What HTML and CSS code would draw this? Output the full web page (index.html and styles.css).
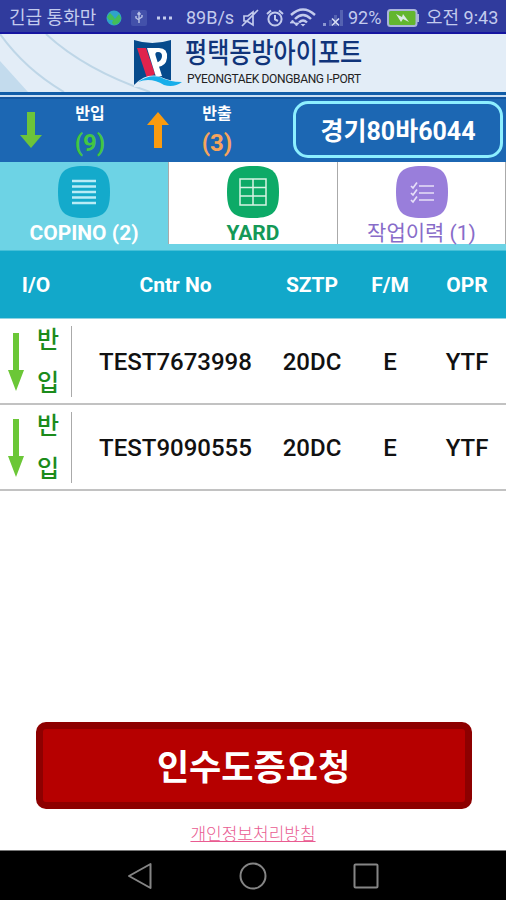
FILE: index.html
```html
<!DOCTYPE html>
<html lang="ko">
<head>
  <meta charset="UTF-8">
  <meta name="viewport" content="width=device-width, initial-scale=1.0">
  <title>평택동방아이포트</title>
  <link rel="stylesheet" href="styles.css">
</head>
<body>

  <div class="status-bar">
    <span class="carrier">긴급 통화만</span>
    <svg class="globe" width="16" height="16" viewBox="0 0 16 16">
      <circle cx="8" cy="8" r="7.5" fill="#2fa3c9"/>
      <path d="M1 7 L4 3 L7 6 L9 9 L13 4 L15 8 Q14 14 8 15 L6 13 L7 10 L3 10 Z" fill="#43bd58"/>
    </svg>
    <svg class="usb" width="16" height="16" viewBox="0 0 16 16">
      <rect width="16" height="16" rx="2" fill="#4351aa"/>
      <path d="M8 3 V13 M5 6 V8 L8 10 M11 5 V7 L8 9 M6.5 4.5 L8 2.5 L9.5 4.5" fill="none" stroke="#b9c2e6" stroke-width="1.4"/>
    </svg>
    <svg class="more" width="15" height="4" viewBox="0 0 15 4">
      <path d="M0 .5h3v3H0zM6 .5h3v3H6zM12 .5h3v3h-3z" fill="#c3cbed"/>
    </svg>
    <span class="speed">89B/s</span>
    <svg class="mute" width="18" height="18" viewBox="0 0 18 18" fill="none" stroke="#c3cbed" stroke-width="1.7">
      <path d="M3 7 V12 H6 L12 16 V3 L7 7 Z M1 17 L17 1"/>
    </svg>
    <svg class="alarm" width="18" height="18" viewBox="0 0 18 18" fill="none" stroke="#c3cbed" stroke-width="2">
      <circle cx="9" cy="10" r="6.6"/>
      <path d="M9 6 V10.5 L12 12 M1 5 L5 1.5 M17 5 L13 1.5"/>
    </svg>
    <svg class="wifi" width="26" height="19" viewBox="0 0 26 19" fill="none" stroke="#c3cbed" stroke-width="2.4">
      <path d="M1 7 Q13 -4 25 7 M5 11 Q13 3 21 11 M9 14.5 Q13 10.5 17 14.5"/>
      <path d="M13 18.5 L10.5 16 H15.5 Z" fill="#c3cbed" stroke="none"/>
      <path d="M0 15 L2.5 12 L5 15 Z M4 15 L6.5 18 L9 15 Z" fill="#c3cbed" stroke-width=".8"/>
    </svg>
    <svg class="signal" width="21" height="18" viewBox="0 0 21 18">
      <path d="M0 14h3v3H0z" fill="#8c97d0"/>
      <path d="M6 11h3v6H6zM11 6h3v11h-3zM17 1h3v16h-3z" fill="#5562b1"/>
      <path d="M9 9.5 L16 16.5 M16 9.5 L9 16.5" stroke="#d5dbf3" stroke-width="1.7"/>
    </svg>
    <span class="percent">92%</span>
    <svg class="battery" width="33" height="18" viewBox="0 0 33 18">
      <rect x="1" y="1" width="28.5" height="16" rx="2.5" fill="#63b62e" stroke="#aab4db" stroke-width="2"/>
      <path d="M30 5h2v8h-2z" fill="#aab4db"/>
      <path d="M9 5 L15 8 L16 5 L22 13 L16 10 L14 13 Z" fill="#dceae4"/>
    </svg>
    <span class="clock">오전 9:43</span>
  </div>

  <header class="brand">
    <svg class="brand-lines" viewBox="0 0 506 58" preserveAspectRatio="none">
      <path d="M0 27 L28 58 H0 Z" fill="#c3dbed"/>
      <path d="M0 0 Q25 35 64 58 M46 0 Q85 36 150 58" fill="none" stroke="#bed6e7" stroke-width="2"/>
    </svg>
    <svg class="logo" width="50" height="48" viewBox="0 0 50 48">
      <path d="M1 1 Q19 7 38 1 V42 L1 46 Z" fill="#064a8c"/>
      <path d="M4 9 H13 L22 35 L14 39 Z" fill="#e0234d"/>
      <path d="M14 9 H26 Q35 9 34 19 Q33 27 25 28 L23 24 Q29 22 29 17 Q29 13 25 13 Q21 13 23 18 L29 37 L23 38 Z" fill="#fff"/>
      <path d="M1 46 Q14 33 28 38 Q38 43 49 42 L40 48 H1 Z" fill="#e3edf7"/>
      <path d="M5 43 Q16 35 27 38 Q36 43 49 43 Q41 49 31 46 Q18 38 5 43 Z" fill="#18aeea"/>
    </svg>
    <div class="brand-text">
      <div class="brand-ko">평택동방아이포트</div>
      <div class="brand-en">PYEONGTAEK DONGBANG I-PORT</div>
    </div>
  </header>

  <section class="summary">
    <svg class="arrow-in" width="22" height="36" viewBox="0 0 22 36">
      <path d="M7 0h8v23h7L11 36 0 23h7z" fill="#6cc43a"/>
    </svg>
    <div class="count">
      <b>반입</b>
      <span class="count-in">(9)</span>
    </div>
    <svg class="arrow-out" width="22" height="36" viewBox="0 0 22 36">
      <path d="M7 36h8V13h7L11 0 0 13h7z" fill="#fa9b0f"/>
    </svg>
    <div class="count">
      <b>반출</b>
      <span class="count-out">(3)</span>
    </div>
    <div class="plate"><span>경기80바6044</span></div>
  </section>

  <nav class="tabs">
    <div class="tab tab-copino">
      <svg width="52" height="52" viewBox="0 0 52 52">
        <path d="M26 0C46 0 52 6 52 26S46 52 26 52 0 46 0 26 6 0 26 0Z" fill="#14aacb"/>
        <path d="M14 15H38M14 20.5H38M14 26H38M14 31.5H38M14 37H38" stroke="#b9ecf6" stroke-width="2.4"/>
      </svg>
      <span>COPINO (2)</span>
    </div>
    <div class="tab tab-yard">
      <svg width="52" height="52" viewBox="0 0 52 52">
        <path d="M26 0C46 0 52 6 52 26S46 52 26 52 0 46 0 26 6 0 26 0Z" fill="#0daa67"/>
        <path d="M13 13H39V39H13ZM13 21.5H39M13 30H39M26 13V39" fill="none" stroke="#d8f3e4" stroke-width="1.5"/>
      </svg>
      <span>YARD</span>
    </div>
    <div class="tab tab-history">
      <svg width="52" height="52" viewBox="0 0 52 52">
        <path d="M26 0C46 0 52 6 52 26S46 52 26 52 0 46 0 26 6 0 26 0Z" fill="#997edb"/>
        <path d="M23 20H38M23 27H38M23 34H38M15 20L17 22L21 16.5M15 27L17 29L21 23.5M15 34L17 36L21 30.5" fill="none" stroke="#e6dff8" stroke-width="1.7"/>
      </svg>
      <span>작업이력 (1)</span>
    </div>
  </nav>

  <div class="list">
    <div class="row head">
      <span>I/O</span>
      <span>Cntr No</span>
      <span>SZTP</span>
      <span>F/M</span>
      <span>OPR</span>
    </div>
    <div class="row">
      <div class="io">
        <svg width="16" height="58" viewBox="0 0 16 58"><path d="M5 0h6v37h5L8 58 0 37h5z" fill="#6bc737"/></svg>
        <span>반<br>입</span>
      </div>
      <span>TEST7673998</span>
      <span>20DC</span>
      <span>E</span>
      <span>YTF</span>
    </div>
    <div class="row">
      <div class="io">
        <svg width="16" height="58" viewBox="0 0 16 58"><path d="M5 0h6v37h5L8 58 0 37h5z" fill="#6bc737"/></svg>
        <span>반<br>입</span>
      </div>
      <span>TEST9090555</span>
      <span>20DC</span>
      <span>E</span>
      <span>YTF</span>
    </div>
  </div>

  <footer class="actions">
    <button type="button" class="request">인수도증요청</button>
    <a href="#" class="privacy">개인정보처리방침</a>
  </footer>

  <div class="nav-bar">
    <svg width="26" height="28" viewBox="0 0 26 28"><path d="M2 14L23.5 2V26Z"/></svg>
    <svg width="28" height="28" viewBox="0 0 28 28"><circle cx="14" cy="14" r="12.5"/></svg>
    <svg width="26" height="26" viewBox="0 0 26 26"><rect x="1.5" y="1.5" width="23" height="23" rx="1"/></svg>
  </div>

</body>
</html>
```
FILE: styles.css
```css
* {
  box-sizing: border-box;
}
body {
  margin: 0;
  height: 900px;
  display: flex;
  flex-direction: column;
  overflow: hidden;
  background-color: #fff;
  font-family: Roboto, "Noto Sans CJK KR", sans-serif;
}
svg {
  display: block;
  flex-shrink: 0;
}

/* phone status bar */
.status-bar {
  height: 34px;
  display: flex;
  align-items: center;
  padding: 3px 0 0 9px;
  background-color: #303b9d;
  border-bottom: 2px solid #1515a0;
  color: #c3cbed;
  font-size: 18px;
  line-height: 29px;
  white-space: nowrap;
}
.carrier {
  width: 97px;
}
.usb {
  margin-left: 9px;
}
.more {
  margin-left: 10px;
}
.speed {
  width: 56px;
  margin-left: 14px;
}
.mute {
  margin-left: -1px;
}
.alarm {
  margin-left: 7px;
}
.wifi {
  margin-left: 6px;
}
.signal {
  margin-left: 7px;
}
.percent {
  width: 38px;
  margin-left: 4px;
}
.battery {
  margin-left: 1px;
}
.clock {
  margin-left: 6px;
}

/* company banner */
.brand {
  position: relative;
  height: 58px;
  display: flex;
  padding: 5px 0 0 133px;
  background-color: #e3edf7;
}
.brand-lines {
  position: absolute;
  top: 0;
  left: 0;
  width: 100%;
  height: 100%;
}
.logo,
.brand-text {
  position: relative;
}
.brand-text {
  margin-left: 2px;
  white-space: nowrap;
}
.brand-ko {
  width: 176px;
  height: 32px;
  color: #10347a;
  font-size: 28px;
  font-weight: 500;
  line-height: 29px;
  transform: scaleX(0.86);
  transform-origin: left;
}
.brand-en {
  margin-left: 2px;
  color: #222;
  font-size: 12px;
  line-height: 16px;
  letter-spacing: -0.35px;
}

/* in / out totals */
.summary {
  height: 70px;
  display: flex;
  align-items: flex-start;
  padding: 12px 3px 0 20px;
  background: linear-gradient(#115ca7 0 3px, #c9def3 3px 5px, #1456a1 5px 7px, #1c67b3 7px);
}
.arrow-in,
.arrow-out {
  margin-top: 8px;
}
.count {
  width: 96px;
  text-align: center;
  color: #fff;
}
.count b {
  display: block;
  font-size: 16px;
  line-height: 20px;
}
.count span {
  display: block;
  font-size: 24px;
  font-weight: 700;
  line-height: 38px;
}
.count .count-in {
  color: #43c643;
}
.count .count-out {
  color: #f6a45c;
}
.arrow-out {
  margin-left: 9px;
}
.plate {
  width: 210px;
  height: 57px;
  margin: -3px 0 0 auto;
  border: 3px solid #8defff;
  border-radius: 15px;
  color: #fff;
  font-size: 25px;
  font-weight: 700;
  line-height: 55px;
  text-align: center;
}

/* tabs */
.tabs {
  height: 89px;
  display: grid;
  grid-template-columns: 168px 169px 169px;
  background-color: #6dd3e5;
  border-bottom: 1px solid #45bfd7;
}
.tab {
  height: 82px;
  display: flex;
  flex-direction: column;
  align-items: center;
  padding-top: 4px;
  background-color: #fff;
  border-left: 1px solid #aaa;
  font-size: 21px;
  font-weight: 700;
  line-height: 30px;
  white-space: nowrap;
}
.tab span {
  height: 26px;
}
.tab-copino {
  background-color: #6dd3e5;
  border-left: 0;
  color: #fff;
}
.tab-yard {
  color: #149957;
}
.tab-history {
  color: #886cc9;
  font-weight: 400;
  border-right: 1px solid #aaa;
}

/* container list */
.row {
  height: 86px;
  display: grid;
  grid-template-columns: 72px 207px 66px 90px 64px;
  align-items: center;
  border-bottom: 2px solid #c2c2c2;
  color: #111;
  font-size: 24px;
  font-weight: 500;
  text-align: center;
}
.row > span {
  padding-top: 1px;
}
.row.head {
  height: 68px;
  background-color: #12a8ca;
  border-bottom: 1px solid #8fd4e3;
  color: #fff;
  font-size: 21px;
  font-weight: 700;
}
.io {
  height: 71px;
  display: flex;
  justify-content: space-between;
  padding: 7px 12px 0 8px;
  border-right: 1px solid #aaa;
}
.io span {
  margin-top: -14px;
  color: #1b8b1b;
  font-size: 24px;
  font-weight: 500;
  line-height: 43px;
}

/* bottom actions */
.actions {
  display: flex;
  flex-direction: column;
  align-items: center;
  margin-top: auto;
}
.request {
  width: 436px;
  height: 87px;
  margin-left: 1px;
  padding: 0 0 2px;
  background-color: #b60000;
  border: 7px solid #8d0000;
  border-radius: 10px;
  color: #fff;
  font-family: inherit;
  font-size: 35px;
  font-weight: 700;
}
.privacy {
  height: 41px;
  padding-top: 13px;
  color: #e95b91;
  font-size: 17px;
  font-weight: 300;
  line-height: 24px;
}

/* phone navigation bar */
.nav-bar {
  height: 50px;
  display: flex;
  align-items: center;
  justify-content: center;
  gap: 86px;
  background-color: #000;
  border-top: 1px solid #777;
}
.nav-bar svg {
  fill: none;
  stroke: #858585;
  stroke-width: 2;
  stroke-linejoin: round;
}
```
